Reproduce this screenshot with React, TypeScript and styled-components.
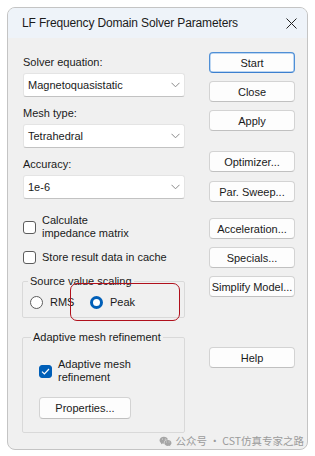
import styled, { createGlobalStyle } from "styled-components";
import { RiWechatFill } from "react-icons/ri";

const GlobalStyle = createGlobalStyle`
  html, body {
    margin: 0;
    padding: 0;
    background: #ffffff;
  }
  body {
    font-family: "Liberation Sans", Arial, sans-serif;
  }
`;

const Window = styled.div`
  position: relative;
  box-sizing: border-box;
  margin: 7px 0 0 7px;
  width: 301px;
  height: 443px;
  border: 1px solid #c4c4c4;
  border-radius: 8px;
  background: #f0f0f0;
  overflow: hidden;
  display: flex;
  flex-direction: column;
`;

const TitleBar = styled.div`
  height: 30px;
  flex-shrink: 0;
  background: #eef3f9;
  display: flex;
  align-items: center;
  justify-content: space-between;
  padding: 0 10px 0 14px;
`;

const Title = styled.span`
  font-size: 12px;
  color: #1b1b1b;
  letter-spacing: -0.15px;
`;

const CloseGlyph = styled.svg`
  width: 11px;
  height: 11px;
  display: block;
`;

const Body = styled.div`
  flex: 1;
  display: flex;
  gap: 24px;
  padding: 0 0 0 15px;
  font-size: 11px;
  color: #1a1a1a;
`;

const LeftColumn = styled.div`
  width: 162px;
  display: flex;
  flex-direction: column;
  padding-top: 17px;
`;

const RightColumn = styled.div`
  width: 86px;
  display: flex;
  flex-direction: column;
  padding-top: 14px;
`;

const FieldLabel = styled.div<{ $first?: boolean }>`
  line-height: 14px;
  margin-top: ${({ $first }) => ($first ? "0" : "9px")};
  margin-bottom: 4px;
`;

const SelectBox = styled.div`
  box-sizing: border-box;
  height: 24px;
  background: #ffffff;
  border: 1px solid #e4e4e4;
  border-bottom-color: #c2c2c2;
  border-radius: 3px;
  display: flex;
  align-items: center;
  justify-content: space-between;
  padding: 0 4px 0 4px;
`;

const Chevron = styled.svg`
  width: 9px;
  height: 6px;
  display: block;
`;

const CheckRow = styled.div<{ $gap: number }>`
  display: flex;
  align-items: center;
  gap: 6px;
  margin-top: ${({ $gap }) => $gap}px;
  line-height: 13px;
`;

const Box = styled.span<{ $checked?: boolean }>`
  box-sizing: border-box;
  width: 13px;
  height: 13px;
  flex-shrink: 0;
  border-radius: 3px;
  border: 1px solid ${({ $checked }) => ($checked ? "#005fb8" : "#5c5c5c")};
  background: ${({ $checked }) => ($checked ? "#005fb8" : "#ffffff")};
  display: flex;
  align-items: center;
  justify-content: center;
`;

const Group = styled.fieldset<{ $gap: number }>`
  position: relative;
  margin: ${({ $gap }) => $gap}px 0 0 -1px;
  padding: 0;
  border: 1px solid #d9d9d9;
  border-radius: 2px;
  min-width: 0;
`;

const Legend = styled.legend<{ $indent: number }>`
  margin-left: ${({ $indent }) => $indent}px;
  padding: 0 2px;
  line-height: 14px;
  font-size: 11px;
  color: #1a1a1a;
`;

const RadioRow = styled.div`
  display: flex;
  align-items: center;
  padding: 7px 0 8px 7px;
  line-height: 14px;
`;

const RadioItem = styled.label<{ $width?: number }>`
  display: flex;
  align-items: center;
  gap: 7px;
  width: ${({ $width }) => ($width ? `${$width}px` : "auto")};
`;

const Radio = styled.span<{ $on?: boolean }>`
  box-sizing: border-box;
  width: 13px;
  height: 13px;
  border-radius: 50%;
  border: ${({ $on }) => ($on ? "3.5px solid #005fb8" : "1px solid #5c5c5c")};
  background: #ffffff;
`;

const Highlight = styled.div`
  position: absolute;
  left: 47px;
  top: -5px;
  width: 110px;
  height: 38px;
  box-sizing: border-box;
  border: 1.5px solid #b0101c;
  border-radius: 7px;
  pointer-events: none;
`;

const GroupContent = styled.div`
  display: flex;
  flex-direction: column;
  align-items: flex-start;
  padding: 14px 0 13px 16px;
`;

const PushButton = styled.button<{ $gap: number; $default?: boolean }>`
  box-sizing: border-box;
  width: 86px;
  height: 21px;
  margin-top: ${({ $gap }) => $gap}px;
  padding: 0;
  font-family: "Liberation Sans", Arial, sans-serif;
  font-size: 11px;
  color: #1a1a1a;
  background: #fdfdfd;
  border: 1px solid ${({ $default }) => ($default ? "#4f8fd6" : "#d3d3d3")};
  border-bottom-color: ${({ $default }) => ($default ? "#3b7fcf" : "#c0c0c0")};
  border-radius: 4px;
  box-shadow: ${({ $default }) => ($default ? "inset 0 0 0 0.5px #7fb0e6" : "none")};
`;

const SmallButton = styled(PushButton)`
  width: 92px;
  height: 22px;
`;

const Watermark = styled.div`
  position: absolute;
  right: 3px;
  bottom: 1px;
  display: flex;
  align-items: center;
  gap: 4px;
  font-family: "Noto Sans CJK SC", "Liberation Sans", sans-serif;
  font-size: 10.5px;
  color: #9b9b9b;
  line-height: 14px;
`;

function Select({ value }: { value: string }) {
  return (
    <SelectBox>
      <span>{value}</span>
      <Chevron viewBox="0 0 9 6">
        <path d="M0.5 0.8 L4.5 4.8 L8.5 0.8" fill="none" stroke="#8a8a8a" strokeWidth="1" />
      </Chevron>
    </SelectBox>
  );
}

export default function App() {
  return (
    <>
      <GlobalStyle />
      <Window>
        <TitleBar>
          <Title>LF Frequency Domain Solver Parameters</Title>
          <CloseGlyph viewBox="0 0 11 11">
            <path d="M0.5 0.5 L10.5 10.5 M10.5 0.5 L0.5 10.5" stroke="#222" strokeWidth="1" />
          </CloseGlyph>
        </TitleBar>
        <Body>
          <LeftColumn>
            <FieldLabel $first>Solver equation:</FieldLabel>
            <Select value="Magnetoquasistatic" />
            <FieldLabel>Mesh type:</FieldLabel>
            <Select value="Tetrahedral" />
            <FieldLabel>Accuracy:</FieldLabel>
            <Select value="1e-6" />

            <CheckRow $gap={15}>
              <Box />
              <span>
                Calculate
                <br />
                impedance matrix
              </span>
            </CheckRow>
            <CheckRow $gap={11}>
              <Box />
              <span>Store result data in cache</span>
            </CheckRow>

            <Group $gap={10}>
              <Legend $indent={5}>Source value scaling</Legend>
              <RadioRow>
                <RadioItem $width={60}>
                  <Radio />
                  RMS
                </RadioItem>
                <RadioItem>
                  <Radio $on />
                  Peak
                </RadioItem>
              </RadioRow>
              <Highlight />
            </Group>

            <Group $gap={12}>
              <Legend $indent={8}>Adaptive mesh refinement</Legend>
              <GroupContent>
                <CheckRow $gap={0}>
                  <Box $checked>
                    <svg width="9" height="7" viewBox="0 0 9 7">
                      <path d="M1 3.6 L3.4 6 L8 1" fill="none" stroke="#fff" strokeWidth="1.2" />
                    </svg>
                  </Box>
                  <span>
                    Adaptive mesh
                    <br />
                    refinement
                  </span>
                </CheckRow>
                <SmallButton $gap={13}>Properties...</SmallButton>
              </GroupContent>
            </Group>
          </LeftColumn>

          <RightColumn>
            <PushButton $gap={0} $default>
              Start
            </PushButton>
            <PushButton $gap={8}>Close</PushButton>
            <PushButton $gap={8}>Apply</PushButton>
            <PushButton $gap={20}>Optimizer...</PushButton>
            <PushButton $gap={9}>Par. Sweep...</PushButton>
            <PushButton $gap={16}>Acceleration...</PushButton>
            <PushButton $gap={8}>Specials...</PushButton>
            <PushButton $gap={8}>Simplify Model...</PushButton>
            <PushButton $gap={50}>Help</PushButton>
          </RightColumn>
        </Body>
        <Watermark>
          <RiWechatFill size={13} color="#a5a5a5" />
          <span>公众号 · CST仿真专家之路</span>
        </Watermark>
      </Window>
    </>
  );
}
